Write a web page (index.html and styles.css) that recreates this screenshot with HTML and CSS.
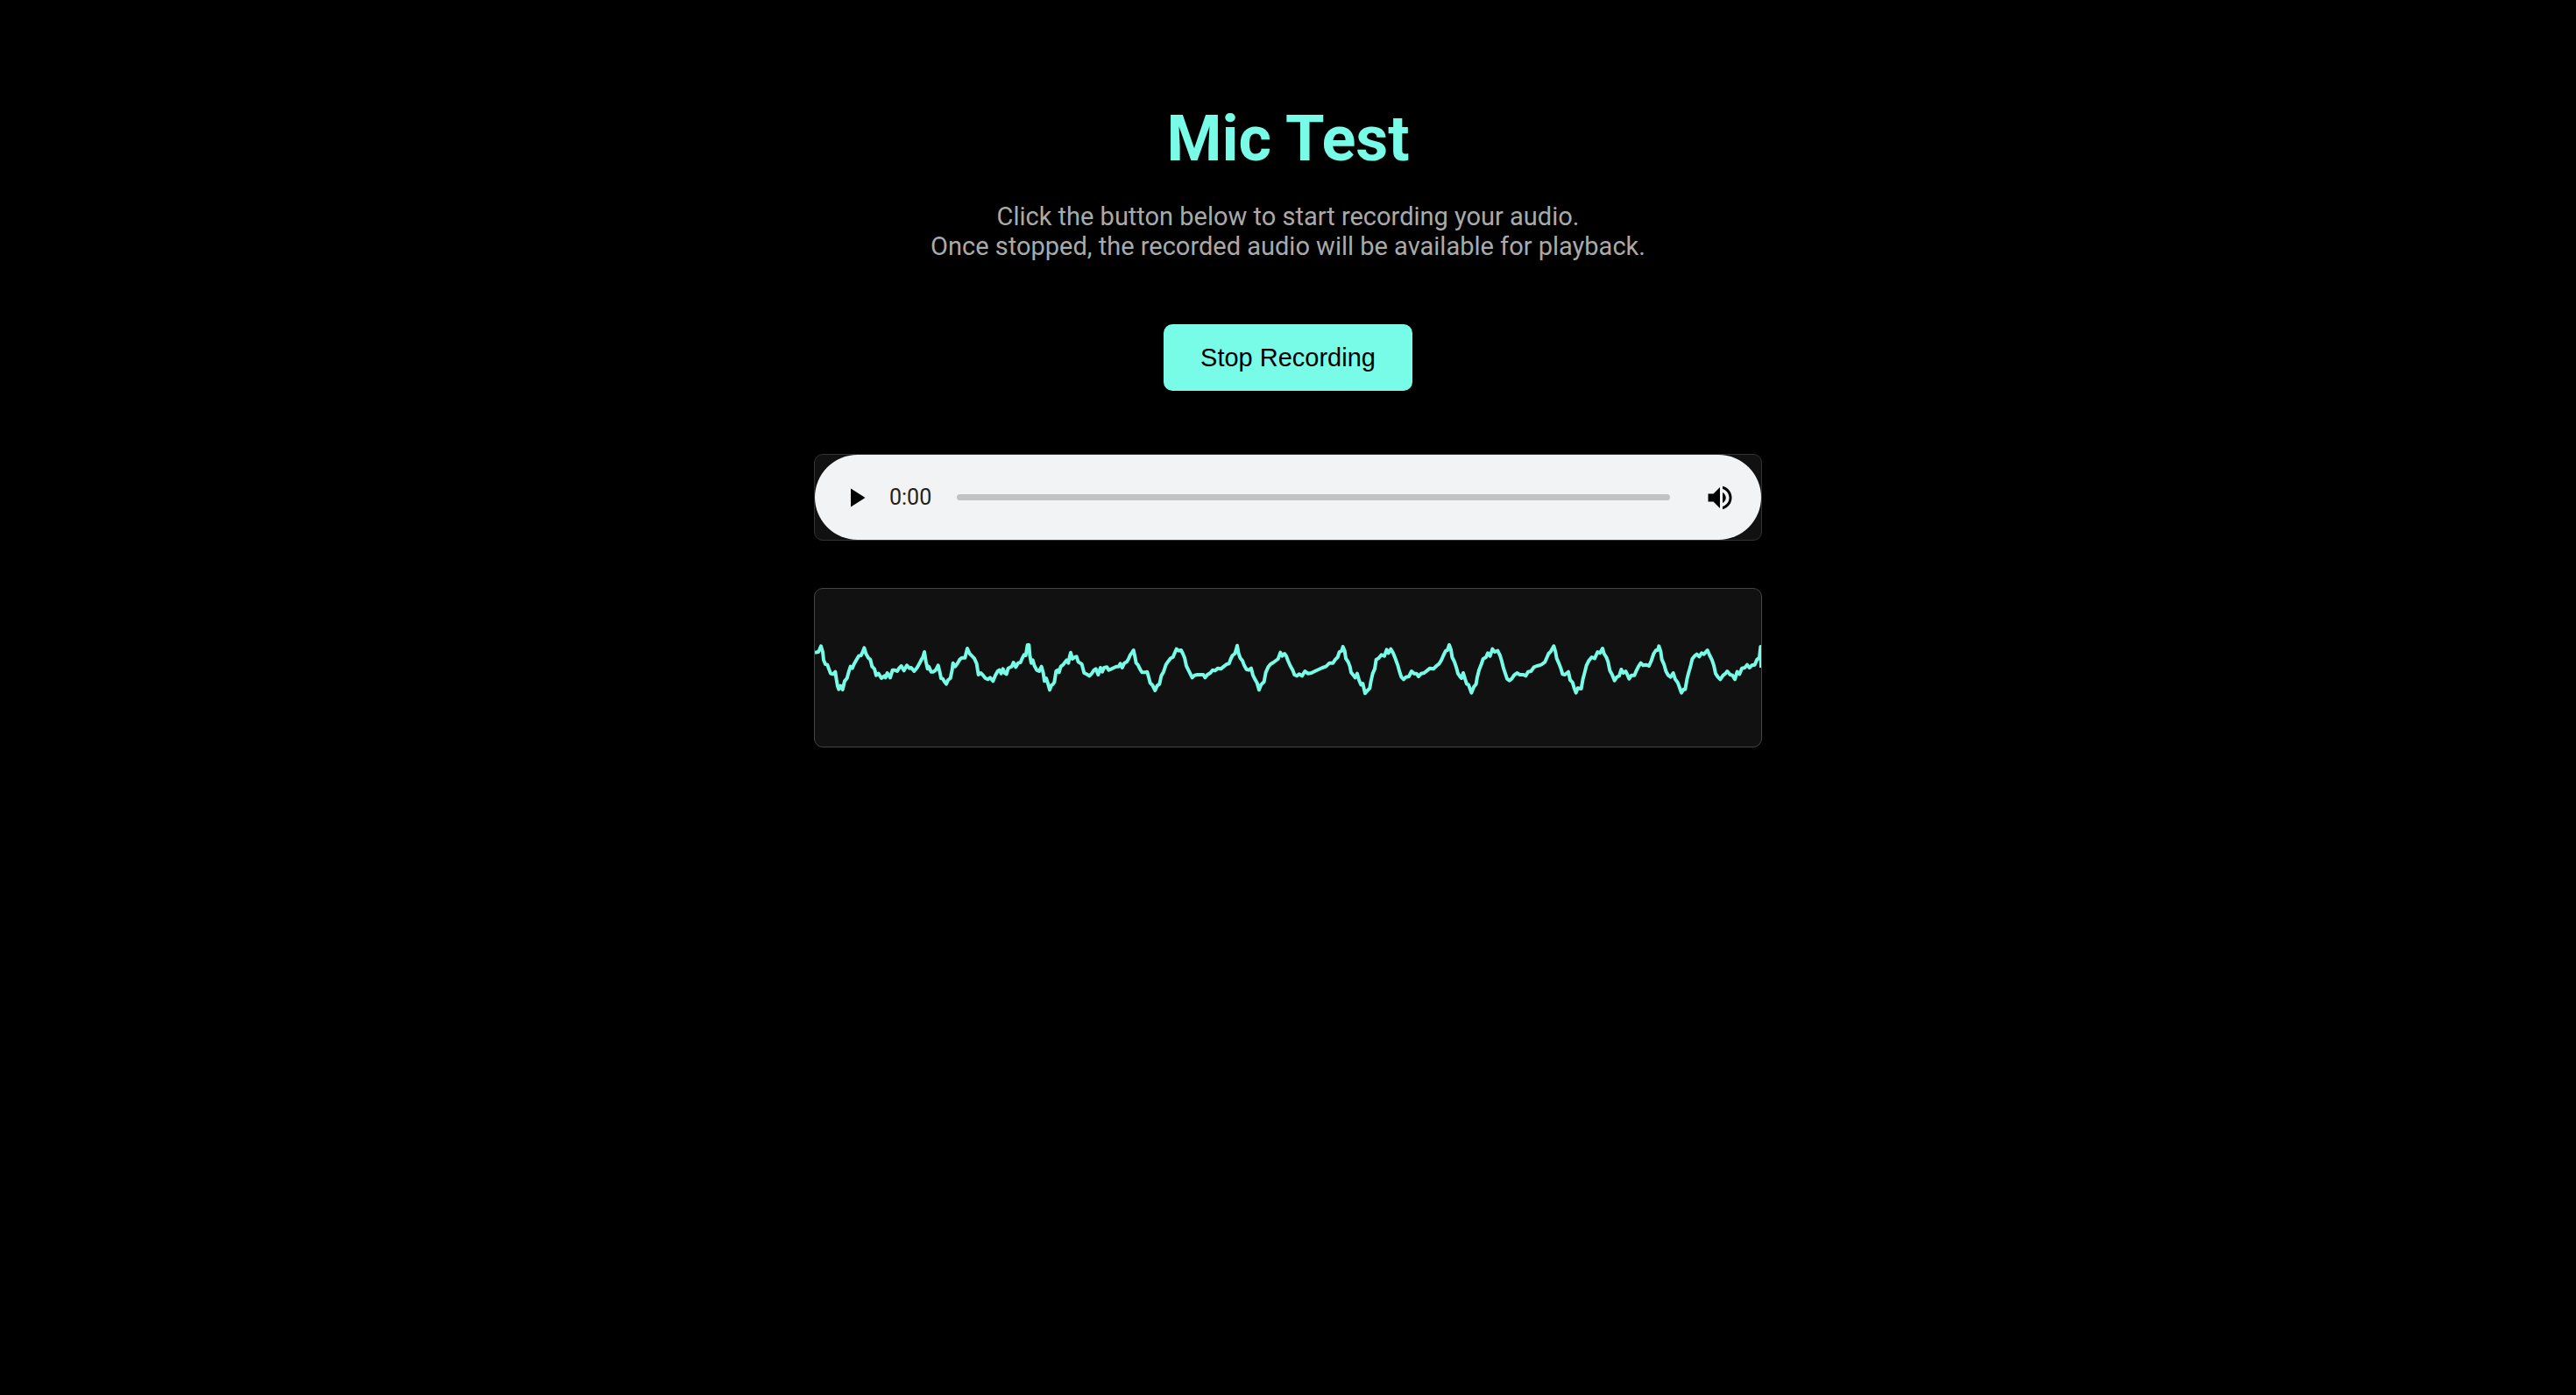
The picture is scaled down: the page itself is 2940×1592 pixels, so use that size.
FILE: index.html
```html
<!DOCTYPE html>
<html lang="en">
<head>
  <meta charset="utf-8">
  <meta name="viewport" content="width=device-width, initial-scale=1">
  <title>Mic Test</title>
  <link rel="stylesheet" href="styles.css">
</head>
<body>
  <main class="mic-test">
    <h1 class="title">Mic Test</h1>
    <p class="intro">Click the button below to start recording your audio.<br>Once stopped, the recorded audio will be available for playback.</p>
    <button class="record" type="button">Stop Recording</button>
    <section class="panel" aria-label="Playback">
      <div class="player">
        <button class="icon-button" type="button" aria-label="Play">
          <svg class="icon" viewBox="0 0 24 24" aria-hidden="true"><path d="M8 5v14l11-7z"/></svg>
        </button>
        <span class="time">0:00</span>
        <input class="seek" type="range" min="0" max="100" value="0" aria-label="Seek">
        <button class="icon-button" type="button" aria-label="Mute">
          <svg class="icon" viewBox="0 0 24 24" aria-hidden="true"><path d="M3 9v6h4l5 5V4L7 9H3zm13.500 3c0-1.770-1.020-3.290-2.500-4.030v8.050c1.480-.73 2.500-2.250 2.500-4.020zM14 3.230v2.060c2.890.86 5 3.540 5 6.710s-2.110 5.850-5 6.710v2.060c4.010-.91 7-4.490 7-8.770s-2.990-7.860-7-8.770z"/></svg>
        </button>
      </div>
    </section>
    <section class="panel panel-wave" aria-label="Waveform">
      <canvas class="wave" id="wave" width="1080" height="180"></canvas>
    </section>
  </main>
  <script src="wave.js"></script>
</body>
</html>
```
FILE: styles.css
```css
* {
  box-sizing: border-box;
}

body {
  margin: 0;
  background: #000;
  color: #aaa;
  font-family: Roboto, sans-serif;
}

.mic-test {
  display: flex;
  flex-direction: column;
  align-items: center;
  padding: 117px 36px 72px;
  text-align: center;
}

.title {
  margin: 0 0 29px;
  color: #78fce8;
  font-size: 72px;
  line-height: 84px;
  font-weight: 700;
}

.intro {
  margin: 0 0 72px;
  font-size: 29px;
  line-height: 34px;
}

.record {
  margin: 0 0 72px;
  padding: 21px 42px;
  border: 0;
  border-radius: 10px;
  background: #78fce8;
  color: #000;
  font-family: "Liberation Sans", Arial, sans-serif;
  font-size: 29px;
  line-height: 34px;
  cursor: pointer;
}

.panel {
  width: 100%;
  max-width: 1082px;
  margin-bottom: 54px;
  border: 1px solid #333;
  border-radius: 10px;
  background: #111;
  overflow: hidden;
}

.panel-wave {
  border-color: #444;
}

.player {
  display: flex;
  align-items: center;
  height: 97px;
  padding: 0 29px;
  border-radius: 49px;
  background: #f1f3f4;
}

.icon-button {
  display: flex;
  padding: 0;
  border: 0;
  background: none;
  cursor: pointer;
}

.icon {
  width: 36px;
  height: 36px;
  fill: #000;
}

.time {
  margin: 0 29px 0 20px;
  color: #202124;
  font-size: 25px;
  line-height: 30px;
}

.seek {
  flex: 1;
  min-width: 0;
  height: 7px;
  margin: 0 39px 0 0;
  border-radius: 4px;
  background: #c1c2c3;
  appearance: none;
}

.seek::-webkit-slider-thumb {
  width: 7px;
  height: 7px;
  background: transparent;
  appearance: none;
}

.wave {
  display: block;
  width: 100%;
}
```
FILE: wave.js
```js
// Each block holds x, y samples in thirds of a canvas pixel, shifted by dx, dy.
const blocks = [
  { dx: -30, dy: -34, samples: [
    30,252, 42,250, 46,242, 51,230, 57,250, 60,278, 66,292, 73,294, 78,308, 84,324, 92,326, 100,318, 104,345, 108,368, 112,378, 118,366, 125,379, 132,350, 140,340, 146,318, 152,300, 158,306, 164,292, 172,278, 180,264, 188,262, 194,250, 199,236, 205,256, 213,270, 220,276, 226,300, 234,308, 240,330, 248,324, 258,340, 268,332, 272,338, 278,322, 288,338, 296,312, 304,312, 312,316, 318,306, 326,298, 335,314, 345,296, 354,306, 360,304, 370,316, 380,304, 388,290, 396,274, 400,268, 405,250, 410,282, 416,308, 420,300, 428,318, 436,318, 444,312, 452,296, 458,320, 462,340, 468,342, 474,352, 480,360, 486,346, 494,340, 500,312, 503,288, 510,300, 518,290, 526,276, 534,270, 544,270, 552,238, 560,256, 568,264, 576,272, 584,290, 590,328, 598,322, 606,330, 614,340, 622,344, 630,338, 640,350, 648,330, 656,316, 662,312, 668,324, 674,308, 680,322, 686,326, 692,306, 700,302, 704,300, 710,286, 718,302, 726,288, 734,286, 740,272, 746,260, 752,262, 758,226, 763,226, 766,262, 771,288, 776,278, 782,298, 790,312, 798,316, 806,300, 812,322, 816,350, 822,340, 828,358, 834,380, 840,364 ] },
  { dx: 810, dy: 116, samples: [
    4,212, 10,204, 16,166, 22,162, 26,170, 32,150, 40,144, 46,136, 52,128, 58,138, 62,118, 66,102, 72,124, 80,118, 86,116, 92,134, 98,138, 104,142, 112,172, 120,176, 130,182, 138,174, 146,162, 152,158, 160,178, 168,154, 174,168, 180,154, 190,152, 196,162, 206,158, 214,154, 222,150, 230,150, 236,140, 242,154, 250,138, 258,134, 264,124, 270,110, 276,102, 281,94, 286,116, 290,138, 296,144, 304,160, 310,170, 320,170, 328,168, 334,190, 338,206, 346,214, 355,232, 362,216, 370,210, 376,182, 384,168, 392,144, 400,132, 408,122, 416,118, 422,104, 428,90, 436,96, 444,94, 450,106, 456,120, 462,148, 470,164, 476,176, 482,188, 490,180, 500,178, 510,178, 520,178, 526,188, 534,178, 544,172, 552,162, 560,164, 570,156, 580,158, 590,150, 600,142, 608,140, 614,124, 620,112, 628,106, 632,94, 636,78, 640,102, 646,120, 654,130, 660,146, 668,160, 676,162, 684,156, 690,180, 696,192, 704,206, 711,230, 718,212, 728,202, 734,170, 742,152, 750,142, 760,136, 768,130, 776,124, 784,102, 790,114, 798,106, 804,114, 810,130, 818,148, 826,162, 832,178 ] },
  { dx: 1650, dy: 116, samples: [
    0,182, 8,176, 18,182, 28,166, 38,174, 50,172, 62,166, 75,160, 88,154, 100,150, 112,138, 124,138, 132,126, 140,118, 146,100, 154,96, 158,82, 164,96, 168,122, 176,134, 182,150, 186,170, 194,180, 200,188, 207,174, 213,196, 220,212, 226,208, 234,242, 242,232, 250,224, 254,200, 260,174, 267,158, 272,126, 280,122, 290,110, 300,114, 308,92, 314,104, 322,90, 330,104, 338,124, 346,146, 352,168, 358,186, 366,194, 374,186, 384,184, 393,166, 402,174, 410,174, 417,184, 426,174, 436,172, 446,164, 456,156, 468,158, 478,148, 488,140, 496,126, 502,112, 510,96, 516,94, 522,76, 528,92, 532,118, 540,134, 546,152, 552,174, 560,186, 564,190, 570,172, 576,192, 582,210, 588,212, 598,240, 606,220, 614,210, 618,186, 624,162, 632,142, 638,124, 648,118, 654,104, 662,114, 670,90, 678,100, 688,96, 696,112, 702,132, 708,156, 714,174, 720,192, 728,198, 736,192, 744,180, 754,172, 764,178, 776,178, 784,182, 792,168, 802,166, 812,152, 822,148, 832,146 ] },
  { dx: 2490, dy: -34, samples: [
    0,292, 10,284, 16,270, 22,256, 30,248, 40,230, 46,250, 50,272, 58,290, 64,306, 70,326, 78,328, 90,318, 96,346, 104,354, 110,374, 116,390, 122,374, 134,376, 140,342, 146,320, 152,296, 160,280, 170,268, 180,272, 190,250, 198,254, 207,238, 212,256, 220,268, 226,284, 232,314, 240,328, 248,348, 256,336, 264,332, 271,310, 278,322, 286,316, 292,328, 298,342, 306,330, 316,330, 322,316, 330,300, 338,288, 346,296, 356,294, 366,298, 374,280, 382,256, 390,244, 396,244, 400,230, 406,248, 410,276, 418,294, 424,316, 432,330, 440,336, 449,322, 456,344, 464,354, 470,370, 477,390, 484,378, 490,378, 496,344, 502,320, 508,300, 514,274, 522,264, 530,258, 538,266, 546,254, 554,258, 566,244, 574,262, 582,278, 588,296, 594,324, 602,336, 610,344, 620,330, 628,324, 634,316, 644,328, 652,330, 660,344, 668,318, 676,326, 684,306, 694,304, 702,294, 710,304, 718,296, 728,294, 736,276, 744,270, 748,232, 750,304 ] },
];

const context = document.getElementById("wave").getContext("2d");
context.strokeStyle = "#78fce8";
context.lineWidth = 4;
context.lineJoin = "round";
context.beginPath();
for (const { dx, dy, samples } of blocks) {
  for (let i = 0; i < samples.length; i += 2) {
    context.lineTo((samples[i] + dx) / 3, (samples[i + 1] + dy) / 3);
  }
}
context.stroke();
```
